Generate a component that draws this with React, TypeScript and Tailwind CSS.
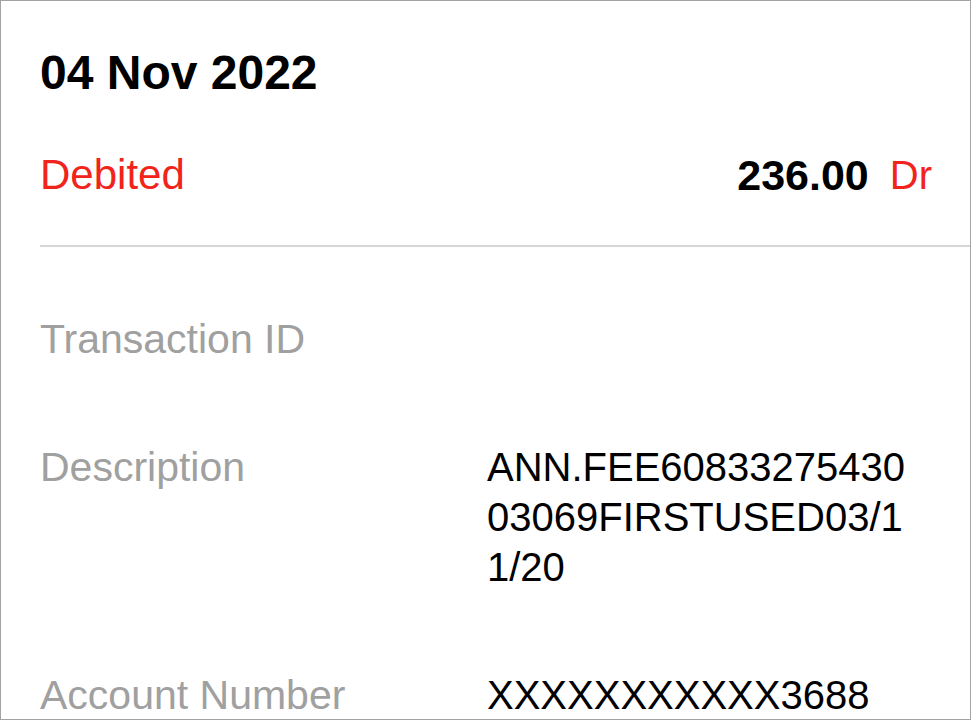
const rows = [
  { label: 'Transaction ID', value: '' },
  { label: 'Description', value: 'ANN.FEE6083327543003069FIRSTUSED03/11/20' },
  { label: 'Account Number', value: 'XXXXXXXXXXX3688' },
]

export default function App() {
  return (
    <div className="w-[971px] h-[720px] overflow-hidden bg-white border border-[#a3a3a3] font-['Liberation_Sans',Arial,sans-serif]">
      <div className="pl-[39px]">
        {/* Header: date and debit amount */}
        <div className="pr-[38px] pt-[48px]">
          <h1 className="text-[48px] leading-[48px] font-bold text-black">04 Nov 2022</h1>
          <div className="mt-[58px] flex items-center justify-between leading-[40px]">
            <span className="text-[42px] text-[#f2231b]">Debited</span>
            <span className="flex items-center gap-[21px]">
              <span className="text-[43px] font-bold text-black">236.00</span>
              <span className="text-[40px] text-[#f2231b]">Dr</span>
            </span>
          </div>
        </div>

        <div className="mt-[50px] h-[2px] bg-[#d6d6d6]" />

        {/* Transaction details */}
        <div className="pr-[38px] pt-[67px] flex flex-col gap-[78px]">
          {rows.map((row) => (
            <div key={row.label} className="flex text-[40px] leading-[50px]">
              <div className="w-[447px] shrink-0 text-[41px] text-[#a0a0a0]">{row.label}</div>
              <div className="w-[432px] break-all text-black">{row.value}</div>
            </div>
          ))}
        </div>
      </div>
    </div>
  )
}
